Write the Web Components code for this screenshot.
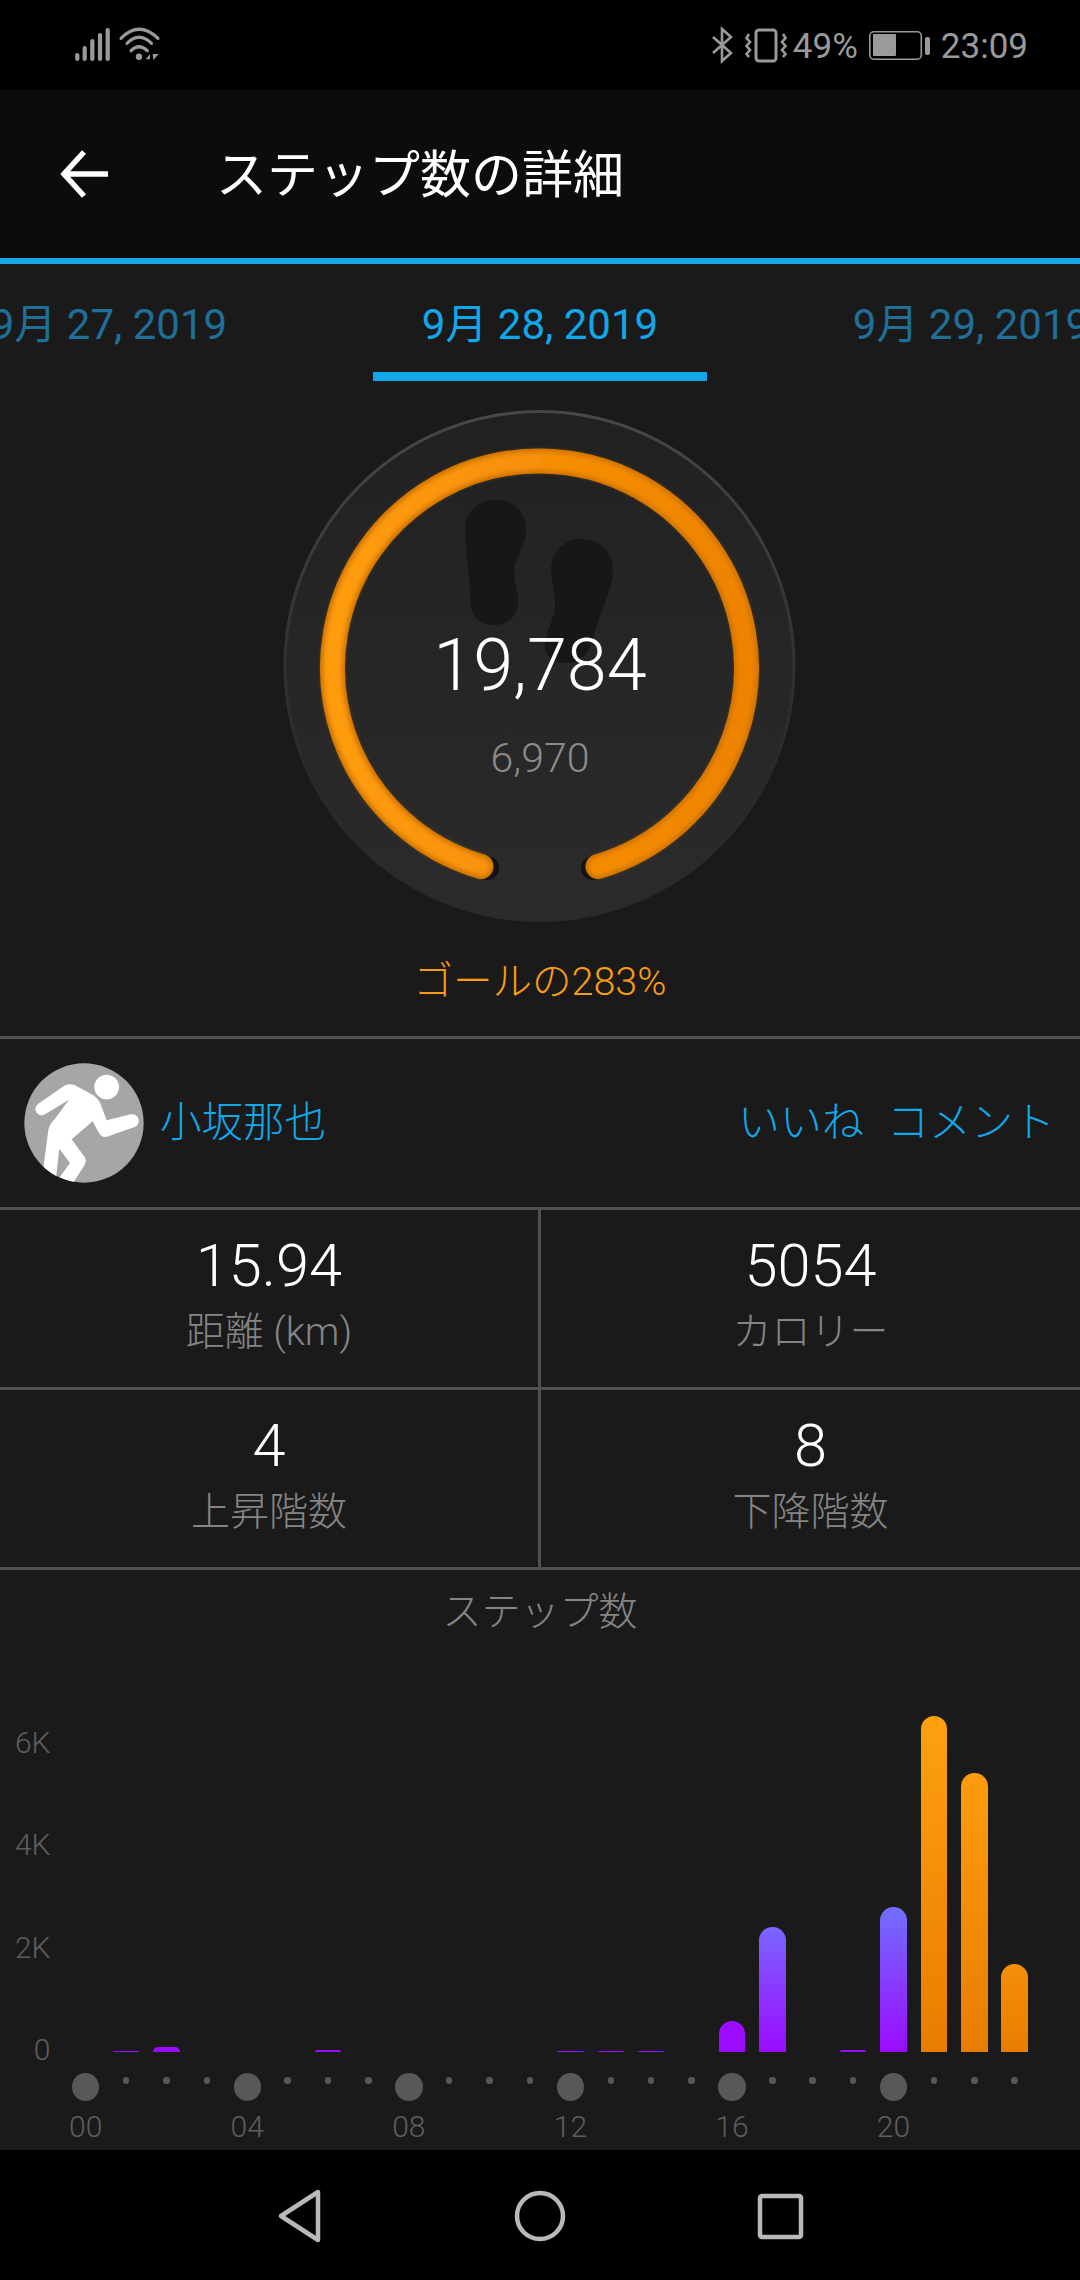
<!DOCTYPE html>
<html lang="ja"><head><meta charset="utf-8"><title>ステップ数の詳細</title>
<style>
html,body{margin:0;padding:0;background:#1a1a1a}
body{width:1080px;height:2280px;overflow:hidden;font-family:Roboto,"Noto Sans CJK JP",sans-serif;display:flex;flex-direction:column}
</style></head><body>
<status-bar></status-bar>
<app-bar>ステップ数の詳細</app-bar>
<date-tabs></date-tabs>
<step-gauge value="19,784" goal="6,970" pct="283%"></step-gauge>
<h-rule></h-rule>
<user-row name="小坂那也"></user-row>
<h-rule></h-rule>
<stat-grid>
  <stat-cell value="15.94" label="距離 (km)"></stat-cell>
  <stat-cell value="5054" label="カロリー"></stat-cell>
</stat-grid>
<h-rule></h-rule>
<stat-grid>
  <stat-cell value="4" label="上昇階数"></stat-cell>
  <stat-cell value="8" label="下降階数"></stat-cell>
</stat-grid>
<h-rule></h-rule>
<step-chart></step-chart>
<nav-bar></nav-bar>
<script>
function def(name, html, init){
  customElements.define(name, class extends HTMLElement{
    connectedCallback(){
      if(this.shadowRoot) return;
      const r=this.attachShadow({mode:'open'});
      r.innerHTML = typeof html==='function' ? html(this) : html;
      if(init) init(r,this);
    }
  });
}
def('status-bar',`<style>
:host{display:flex;height:90px;background:#000;color:#9a9a9a;align-items:flex-start;flex:none;font:400 35px/1 Roboto,sans-serif}
.l{display:flex;margin:28px 0 0 75px;gap:10px}
.r{display:flex;margin:28px 52px 0 auto;align-items:flex-start}
svg{display:block;overflow:visible}
.t{line-height:34px;margin-top:2px}
</style>
<div class="l">
<svg width="35" height="33" viewBox="0 0 35 33" fill="none" stroke="#9a9a9a" stroke-width="4.2" stroke-linecap="round"><path d="M2.3 31V27M9.7 31V20M17.3 31V13M25 31V7M32.7 31V2"/></svg>
<svg width="40" height="33" viewBox="0 0 40 33" fill="none" stroke="#9a9a9a" stroke-width="3.2" stroke-linecap="round"><path d="M1 10.3Q19-7.7 38 10.3M7 15.3Q19 3.3 31.5 15.3M11 22.7Q19 14.7 27.3 22.7"/><circle cx="19" cy="28.7" r="3.2" fill="#9a9a9a" stroke="none"/><path d="M25.7 31.3L30 26V31.3ZM32.7 26H38.7L33.3 32Z" fill="#9a9a9a" stroke="none"/></svg>
</div>
<div class="r">
<svg width="21" height="34" viewBox="0 0 21 34" fill="none" stroke="#9a9a9a" stroke-width="2.6"><path d="M1 9L19 25L10 33V1L19 9L1 25"/></svg>
<svg style="margin-left:12px" width="42" height="34" viewBox="0 0 42 34" fill="none" stroke="#9a9a9a"><rect x="11" y="2" width="20" height="31" rx="3" stroke-width="3"/><path d="M4 6L1.5 10L5 14L1.5 18L5 22L1.5 26L4 29M38 6L40.5 10L37 14L40.5 18L37 22L40.5 26L38 29" stroke-width="2.6"/></svg>
<span class="t" style="margin-left:6px;width:64px">49%</span>
<svg style="margin-left:12px;margin-top:3px" width="61" height="29" viewBox="0 0 61 29" fill="none"><rect x=".8" y=".8" width="51.5" height="27.4" rx="4" stroke="#9a9a9a" stroke-width="1.6"/><rect x="4" y="3" width="23" height="22" rx="1" fill="#9a9a9a"/><rect x="56" y="6" width="5" height="18" rx="2" fill="#9a9a9a"/></svg>
<span class="t" style="margin-left:11px">23:09</span>
</div>`);
def('app-bar',`<style>
:host{display:flex;align-items:center;height:168px;background:#0c0c0c;border-bottom:6px solid #12a7e8;color:#fff;flex:none;font:400 51px/1 Roboto,"Noto Sans CJK JP",sans-serif}
svg{margin-left:60px;width:50px;height:50px;flex:none}
span{margin-left:106px;padding-top:2px}
</style>
<svg viewBox="0 0 50 50" fill="none" stroke="#fff" stroke-width="5.5"><path d="M48 25H5M24 3L4 25L24 47"/></svg><span><slot></slot></span>`);
def('date-tabs',`<style>
:host{display:flex;justify-content:center;height:117px;overflow:hidden;flex:none;color:#1f6f98;font:400 42px/1 Roboto,"Noto Sans CJK JP",sans-serif}
div{flex:none;width:431px;display:flex;flex-direction:column;align-items:center;padding-top:40px;box-sizing:border-box;white-space:nowrap}
span{height:42px;line-height:42px}
.a{color:#12a7e8}
.a i{display:block;width:334px;height:9px;background:#12a7e8;margin-top:26px;flex:none}
</style>
<div><span>9月 27, 2019</span></div><div class="a"><span>9月 28, 2019</span><i></i></div><div><span>9月 29, 2019</span></div>`);
def('step-gauge',h=>`<style>
:host{display:grid;height:654.5px;flex:none;font-family:Roboto,"Noto Sans CJK JP",sans-serif}
svg{grid-area:1/1;display:block}
.t{grid-area:1/1;display:flex;flex-direction:column;align-items:center;z-index:1}
.v{margin-top:245px;font:300 72px/80px Roboto,sans-serif;color:#fff}
.g{margin-top:29px;font:300 41px/46px Roboto,sans-serif;color:#8b8b8b}
.p{margin-top:178px;font:300 39.5px/46px Roboto,"Noto Sans CJK JP",sans-serif;color:#f79c14}
</style>
<svg width="1080" height="654" viewBox="0 381 1080 654">
<defs>
<linearGradient id="d" x1="0" y1="0" x2="0" y2="1"><stop offset="0" stop-color="#212121"/><stop offset="1" stop-color="#2b2b2b"/></linearGradient>
<linearGradient id="e" x1="0" y1="0" x2="0" y2="1"><stop offset="0" stop-color="#484848"/><stop offset=".5" stop-color="#313131"/><stop offset=".72" stop-color="#2a2a2a"/></linearGradient>
<linearGradient id="o" gradientUnits="userSpaceOnUse" x1="320" y1="0" x2="760" y2="0"><stop offset="0" stop-color="#ff9d0d"/><stop offset="1" stop-color="#ee8200"/></linearGradient>
<filter id="b" x="-10%" y="-10%" width="120%" height="120%"><feGaussianBlur stdDeviation="2.5"/></filter>
</defs>
<circle cx="539.5" cy="666" r="254.5" fill="url(#d)" stroke="url(#e)" stroke-width="3"/>
<path fill="#171717" d="M465 528C466 510 480 500 496 500C515 500 527 514 526 532C525 548 514 558 514 572C514 584 519 590 518 603C517 617 507 625 494 625C481 625 472 618 471 607C470 580 466 555 465 528Z"/>
<path fill="#171717" d="M551 572C550 553 564 539 581 539C600 539 614 553 613 572C612 590 600 612 594 635C590 652 582 663 568 663C552 663 543 655 545 643C547 628 557 615 555 600C554 590 552 582 551 572Z"/>
<circle cx="487" cy="868" r="12" fill="#111"/><circle cx="593" cy="868" r="12" fill="#111"/>
<path d="M481 866.5A207 207 0 1 1 598 866.5" fill="none" stroke="#cc7200" stroke-width="25" stroke-linecap="round"/>
<path d="M481 866.5A207 207 0 1 1 598 866.5" fill="none" stroke="url(#o)" stroke-width="19" stroke-linecap="round" filter="url(#b)"/>
</svg>
<div class="t"><span class="v">${h.getAttribute('value')}</span><span class="g">${h.getAttribute('goal')}</span><span class="p">ゴールの${h.getAttribute('pct')}</span></div>`);
def('h-rule',`<style>:host{display:block;height:3px;background:#505050;flex:none}</style>`);
def('user-row',h=>`<style>
:host{display:flex;align-items:center;height:168.5px;flex:none;color:#12a7e8;font:300 42px/1 Roboto,"Noto Sans CJK JP",sans-serif;padding:0 25px 0 24px;box-sizing:border-box}
svg{width:120px;height:120px;flex:none;display:block}
.n{margin-left:16px;font-size:41.5px}
.a{margin-left:auto}
.b{margin-left:23px}
</style>
<svg viewBox="72 68 360 360"><defs><clipPath id="c"><circle cx="252" cy="248" r="179"/></clipPath></defs><circle cx="252" cy="248" r="179" fill="#a6a6a6"/><g clip-path="url(#c)" fill="#fff"><circle cx="320" cy="140" r="37"/><path d="M115 190L195 135Q210 128 225 135L280 165Q300 180 305 200L320 240L392 222A20 20 0 0 1 404 260L325 288Q305 295 295 275L278 243L215 297L250 345Q265 360 250 380L205 450L165 430L210 368L178 325L165 440L125 420L145 270Q148 250 165 235L207 178L135 222A18 18 0 0 1 115 190Z"/></g></svg>
<span class="n">${h.getAttribute('name')}</span><span class="a">いいね</span><span class="b">コメント</span>`);
def('stat-grid',`<style>
:host{display:grid;grid-template-columns:538px 3px 1fr;height:177px;flex:none}
i{background:#505050;grid-row:1;grid-column:2}
::slotted(:first-child){grid-column:1;grid-row:1}
::slotted(:last-child){grid-column:3;grid-row:1}
</style><slot></slot><i></i>`);
def('stat-cell',h=>`<style>
:host{display:flex;flex-direction:column;align-items:center;padding-top:21px;box-sizing:border-box}
.v{font:300 59.5px/70px Roboto,sans-serif;color:#fff}
.l{font:300 39px/50px Roboto,"Noto Sans CJK JP",sans-serif;color:#858585;margin-top:6px}
</style><span class="v">${h.getAttribute('value')}</span><span class="l">${h.getAttribute('label')}</span>`);
const H={1:1,2:5,6:2,12:1,13:1,14:1,16:31,17:125,19:2,20:145,21:336,22:279,23:88};
const G={16:['#9b0bff','#9b0bff'],17:['#7a66ff','#9b0bff'],20:['#716fff','#9b0bff'],21:['#ffa010','#e97c00'],22:['#fd9c0e','#e97c00'],23:['#f58f09','#e97c00']};
let bars='',ticks='';
for(let i=0;i<24;i++){
  const c=G[i]||['#9b0bff','#9b0bff'];
  bars+=`<div class="c">${H[i]?`<b style="height:${H[i]}px;background:linear-gradient(${c[0]},${c[1]})"></b>`:''}</div>`;
  ticks+= i%4===0 ? `<div class="k"><i class="big"></i><span>${String(i).padStart(2,'0')}</span></div>` : `<div class="k"><i class="sm"></i></div>`;
}
def('step-chart',`<style>
:host{display:flex;flex-direction:column;flex:1;min-height:0;color:#5e5e5e;font:300 30px/34px Roboto,sans-serif}
h2{margin:0;text-align:center;font:300 39px/50px Roboto,"Noto Sans CJK JP",sans-serif;color:#858585;padding-top:17px;height:65px;box-sizing:border-box;flex:none}
.p{flex:1;display:grid;grid-template-columns:65.5px repeat(24,40.4px);min-height:0}
.y{grid-column:1;align-self:end;height:341px;margin-bottom:-15px;display:flex;flex-direction:column;justify-content:space-between;align-items:flex-end;padding-right:15px;box-sizing:border-box;z-index:1}
.c{display:flex;align-items:flex-end;justify-content:center}
b{display:block;width:26.5px;border-radius:13.25px 13.25px 0 0}
.x{display:grid;grid-template-columns:repeat(24,40.4px);padding:21px 0 0 65.5px;flex:none;box-sizing:border-box;height:98px}
.k{display:flex;flex-direction:column;align-items:center}
.big{display:block;width:27.5px;height:28px;border-radius:50%;background:#585858;margin-bottom:9px;flex:none}
.sm{display:block;width:6.5px;height:6.5px;border-radius:50%;background:#585858;margin-top:4px}
</style>
<h2>ステップ数</h2>
<div class="p"><div class="y"><span>6K</span><span>4K</span><span>2K</span><span>0</span></div>${bars}</div>
<div class="x">${ticks}</div>`);
def('nav-bar',`<style>
:host{display:flex;justify-content:center;align-items:center;gap:160px;height:130px;background:#000;flex:none}
svg{width:80px;height:80px;display:block}
</style>
<svg viewBox="0 0 80 80" fill="none" stroke="#b9b9b9" stroke-width="4.5" stroke-linejoin="round"><path d="M21 41L58 17V65Z"/></svg>
<svg viewBox="0 0 80 80" fill="none" stroke="#b9b9b9" stroke-width="4.5"><circle cx="40" cy="41" r="23"/></svg>
<svg viewBox="0 0 80 80" fill="none" stroke="#b9b9b9" stroke-width="4.5" stroke-linejoin="round"><rect x="20" y="21" width="41" height="41" rx="2"/></svg>`);
</script>
</body></html>
